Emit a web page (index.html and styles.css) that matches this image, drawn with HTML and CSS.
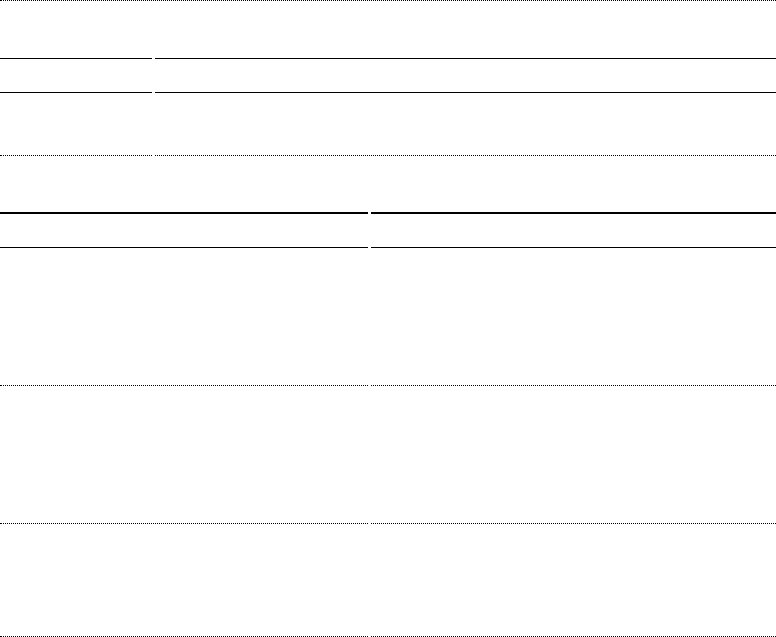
FILE: index.html
```html
<!DOCTYPE html>
<html lang="en">
<head>
  <meta charset="UTF-8">
  <meta name="viewport" content="width=device-width, initial-scale=1.0">
  <title>Report</title>
  <link rel="stylesheet" href="styles.css">
</head>
<body>
  <div class="top-rule"></div>

  <!-- Summary block -->
  <section class="summary">
    <div class="row summary-head">
      <div class="cell label"></div>
      <div class="cell value"></div>
    </div>
    <div class="row summary-body">
      <div class="cell label"></div>
      <div class="cell value"></div>
    </div>
  </section>

  <!-- Two column listing -->
  <section class="listing">
    <div class="row listing-head">
      <div class="cell half-left"></div>
      <div class="cell half-right"></div>
    </div>
    <div class="row listing-row">
      <div class="cell half-left"></div>
      <div class="cell half-right"></div>
    </div>
    <div class="row listing-row">
      <div class="cell half-left"></div>
      <div class="cell half-right"></div>
    </div>
    <div class="row listing-row last">
      <div class="cell half-left"></div>
      <div class="cell half-right"></div>
    </div>
  </section>
</body>
</html>
```
FILE: styles.css
```css
/* Base styles */
* {
  margin: 0;
  padding: 0;
  box-sizing: border-box;
}

body {
  font-family: 'Liberation Sans', Arial, sans-serif;
  background: #fff;
  color: #000;
}

.top-rule {
  border-bottom: 1px dotted #000;
}

/* Rows */
.row {
  display: flex;
  gap: 3px;
}

/* Summary block */
.summary {
  margin-top: 57px;
}

.summary .label {
  width: 152px;
}

.summary .value {
  flex: 1;
}

.summary-head .cell {
  height: 35px;
  border-top: 1px solid #000;
  border-bottom: 1px solid #000;
}

.summary-body .cell {
  height: 63px;
  border-bottom: 1px dotted #000;
}

/* Listing */
.listing {
  margin-top: 56px;
}

.listing .half-left {
  width: 368px;
}

.listing .half-right {
  flex: 1;
}

.listing-head .cell {
  height: 36px;
  border-top: 2px solid #000;
  border-bottom: 1px solid #000;
}

.listing-row .cell {
  height: 138px;
  border-bottom: 1px dotted #000;
}

.listing-row.last .cell {
  height: 113px;
}
```
